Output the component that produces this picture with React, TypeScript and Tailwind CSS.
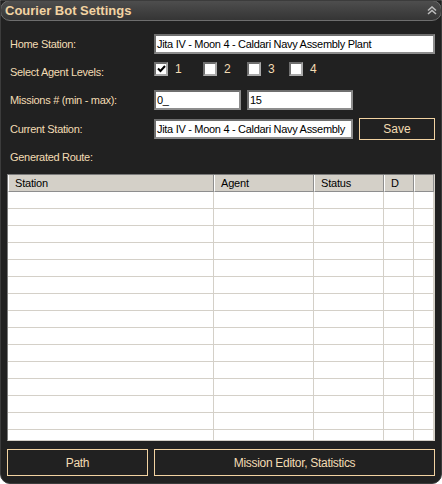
import React from 'react'

const label = 'text-[#f3dcb4] text-[11px] tracking-[-0.3px] leading-none'

const cols = [
  { name: 'Station', w: 'w-[206px]' },
  { name: 'Agent', w: 'w-[100px]' },
  { name: 'Status', w: 'w-[70px]' },
  { name: 'D', w: 'w-[30px]' },
  { name: '', w: 'flex-1' },
]

function TextBox({ value, className }: { value: string; className: string }) {
  return (
    <div
      className={`h-[20px] bg-white border-2 border-t-[#6f6f6f] border-l-[#6f6f6f] border-b-[#8d8d8d] border-r-[#8d8d8d] flex items-center px-[1px] text-black text-[11px] tracking-[-0.3px] whitespace-nowrap overflow-hidden ${className}`}
    >
      {value}
    </div>
  )
}

function Check({ checked, num, className = '' }: { checked?: boolean; num: string; className?: string }) {
  return (
    <div className={`flex items-center w-[28px] ${className}`}>
      <div className="w-[14px] h-[14px] bg-white border-2 border-t-[#6f6f6f] border-l-[#6f6f6f] border-b-[#a9a9a9] border-r-[#a9a9a9] flex items-center justify-center">
        {checked && (
          <svg width="9" height="8" viewBox="0 0 9 8">
            <path d="M1 3.5 L3.5 6 L8 1" stroke="#000" strokeWidth="2" fill="none" />
          </svg>
        )}
      </div>
      <span className={`${label} ml-[7px] text-[12px]`}>{num}</span>
    </div>
  )
}

export default function App() {
  const rows = Array.from({ length: 15 })
  return (
    <div
      className="w-[442px] h-[484px] bg-[#212121] flex flex-col rounded-b-[10px] border border-[#3c3c3c] overflow-hidden"
      style={{ fontFamily: '"Liberation Sans", Arial, sans-serif' }}
    >
      {/* title bar */}
      <div className="h-[21px] -mx-[1px] -mt-[1px] rounded-[10px] border border-[#6e6e6e] bg-gradient-to-b from-[#4e4e4e] to-[#353535] flex items-center justify-between pl-[4px] pr-[4px]">
        <span className="text-[#f2d3a2] text-[13px] font-bold">Courier Bot Settings</span>
        <svg width="10" height="9" viewBox="0 0 10 9">
          <path d="M1 4.5 L5 1 L9 4.5 M1 8 L5 4.5 L9 8" stroke="#bdbdbd" strokeWidth="1.6" fill="none" />
        </svg>
      </div>

      <div className="flex flex-col pl-[9px] pr-[6px]">
        <div className="mt-[13px] flex items-center h-[20px]">
          <span className={`${label} w-[144px]`}>Home Station:</span>
          <TextBox className="w-[281px]" value="Jita IV - Moon 4 - Caldari Navy Assembly Plant" />
        </div>

        <div className="mt-[8px] flex items-center h-[14px]">
          <span className={`${label} w-[144px] pt-[6px]`}>Select Agent Levels:</span>
          <div className="flex items-center">
            <Check checked num="1" />
            <Check num="2" className="ml-[21px]" />
            <Check num="3" className="ml-[16px]" />
            <Check num="4" className="ml-[14px]" />
          </div>
        </div>

        <div className="mt-[14px] flex items-center h-[20px]">
          <span className={`${label} w-[144px]`}>Missions # (min - max):</span>
          <TextBox className="w-[87px]" value="0_" />
          <TextBox className="w-[106px] ml-[6px]" value="15" />
        </div>

        <div className="mt-[8px] flex items-center h-[22px]">
          <span className={`${label} w-[144px]`}>Current Station:</span>
          <TextBox className="w-[199px]" value="Jita IV - Moon 4 - Caldari Navy Assembly" />
          <button className="ml-[6px] w-[76px] h-[22px] border border-[#f2d3a2] text-[#f3dcb4] text-[12px] flex items-center justify-center">
            Save
          </button>
        </div>

        <div className="mt-[10px] h-[14px] flex items-center">
          <span className={label}>Generated Route:</span>
        </div>
      </div>

      {/* table */}
      <div className="mt-[10px] ml-[6px] w-[428px] h-[267px] border border-[#7a7a7a] border-r-[#d4d0c8] border-b-[#d4d0c8] bg-white overflow-hidden flex flex-col">
        <div className="flex h-[17px] shrink-0 bg-[#d4d0c8]">
          {cols.map((c, i) => (
            <div
              key={i}
              className={`${c.w} shrink-0 border-l border-l-white border-r border-r-[#8e8e8e] border-b border-b-[#8e8e8e] px-[6px] text-black text-[11px] tracking-[-0.2px] flex items-center`}
            >
              {c.name}
            </div>
          ))}
        </div>
        {rows.map((_, r) => (
          <div key={r} className="flex h-[17px] shrink-0">
            {cols.map((c, i) => (
              <div key={i} className={`${c.w} shrink-0 border-r border-b border-[#d4d0c8]`} />
            ))}
          </div>
        ))}
      </div>

      {/* buttons */}
      <div className="mt-[8px] ml-[6px] flex gap-[6px] h-[27px]">
        <button className="w-[141px] h-full border border-[#f2d3a2] text-[#f3dcb4] text-[12px] tracking-[-0.3px]">
          Path
        </button>
        <button className="w-[281px] h-full border border-[#f2d3a2] text-[#f3dcb4] text-[12px] tracking-[-0.3px]">
          Mission Editor, Statistics
        </button>
      </div>
    </div>
  )
}
